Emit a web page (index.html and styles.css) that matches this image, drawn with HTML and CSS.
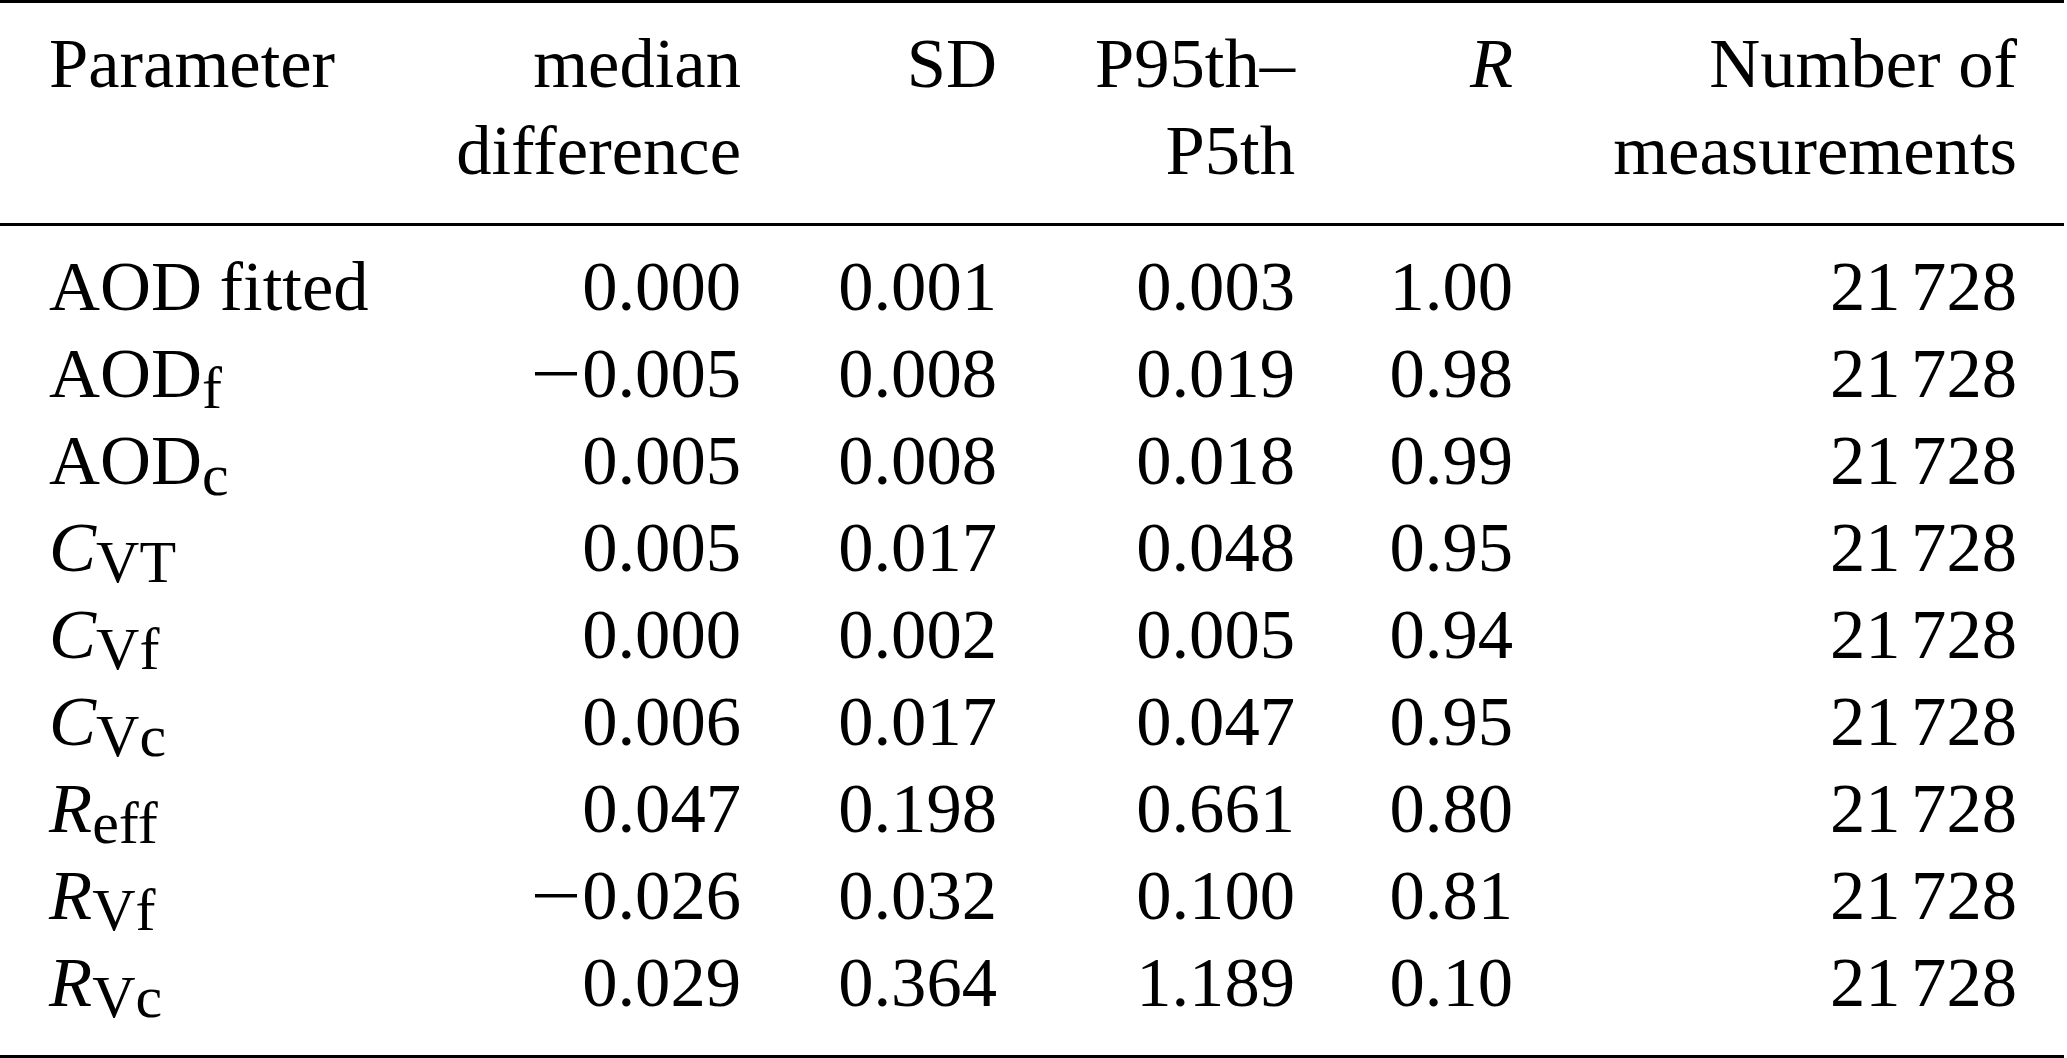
FILE: index.html
```html
<!DOCTYPE html>
<html lang="en">
<head>
<meta charset="utf-8">
<title>Table</title>
<link rel="stylesheet" href="styles.css">
</head>
<body>
<table class="tbl">
  <thead>
    <tr>
      <th class="c1">Parameter</th>
      <th class="c2">median<br>difference</th>
      <th class="c3">SD</th>
      <th class="c4">P95th–<br>P5th</th>
      <th class="c5"><i>R</i></th>
      <th class="c6">Number of<br>measurements</th>
    </tr>
  </thead>
  <tbody>
    <tr><td class="name">AOD fitted</td><td>0.000</td><td>0.001</td><td>0.003</td><td>1.00</td><td class="last">21<span class="thin"></span>728</td></tr>
    <tr><td class="name">AOD<span class="sub">f</span></td><td><span class="minus">−</span>0.005</td><td>0.008</td><td>0.019</td><td>0.98</td><td class="last">21<span class="thin"></span>728</td></tr>
    <tr><td class="name">AOD<span class="sub">c</span></td><td>0.005</td><td>0.008</td><td>0.018</td><td>0.99</td><td class="last">21<span class="thin"></span>728</td></tr>
    <tr><td class="name"><i>C</i><span class="sub">VT</span></td><td>0.005</td><td>0.017</td><td>0.048</td><td>0.95</td><td class="last">21<span class="thin"></span>728</td></tr>
    <tr><td class="name"><i>C</i><span class="sub">Vf</span></td><td>0.000</td><td>0.002</td><td>0.005</td><td>0.94</td><td class="last">21<span class="thin"></span>728</td></tr>
    <tr><td class="name"><i>C</i><span class="sub">Vc</span></td><td>0.006</td><td>0.017</td><td>0.047</td><td>0.95</td><td class="last">21<span class="thin"></span>728</td></tr>
    <tr><td class="name"><i>R</i><span class="sub">eff</span></td><td>0.047</td><td>0.198</td><td>0.661</td><td>0.80</td><td class="last">21<span class="thin"></span>728</td></tr>
    <tr><td class="name"><i>R</i><span class="sub">Vf</span></td><td><span class="minus">−</span>0.026</td><td>0.032</td><td>0.100</td><td>0.81</td><td class="last">21<span class="thin"></span>728</td></tr>
    <tr><td class="name"><i>R</i><span class="sub">Vc</span></td><td>0.029</td><td>0.364</td><td>1.189</td><td>0.10</td><td class="last">21<span class="thin"></span>728</td></tr>
  </tbody>
</table>
</body>
</html>
```

FILE: styles.css
```css
html, body {
  margin: 0;
  padding: 0;
  background: #ffffff;
}

.tbl {
  width: 2064px;
  table-layout: fixed;
  border-collapse: separate;
  border-spacing: 0;
  border-top: 3px solid #000;
  border-bottom: 3px solid #000;
  font-family: "Liberation Serif", "Times New Roman", serif;
  font-size: 70.6px;
  line-height: 87px;
  color: #000;
}

.tbl th,
.tbl td {
  box-sizing: border-box;
  padding: 0;
  text-align: right;
  vertical-align: top;
  font-weight: normal;
  white-space: nowrap;
}

.tbl thead th {
  padding-top: 17px;
  padding-bottom: 29px;
  border-bottom: 3px solid #000;
}

.tbl .c1 { width: 400px; text-align: left; padding-left: 49px; }
.tbl .c2 { width: 341px; }
.tbl .c3 { width: 256px; }
.tbl .c4 { width: 298px; }
.tbl .c5 { width: 218px; }
.tbl .c6 { width: 551px; padding-right: 47px; }

.tbl td.name {
  text-align: left;
  padding-left: 49px;
}

.tbl td.last {
  padding-right: 47px;
}

.tbl tbody tr:first-child td {
  padding-top: 17px;
}

.tbl tbody tr:last-child td {
  padding-bottom: 29px;
}

.tbl i {
  font-style: italic;
}

.sub {
  font-size: 0.85em;
  line-height: 0;
  vertical-align: -0.18em;
}

.thin {
  display: inline-block;
  width: 0.15em;
}

.minus {
  display: inline-block;
  margin-left: 0.15em;
  transform: scaleX(1.28);
  transform-origin: right center;
}
```
